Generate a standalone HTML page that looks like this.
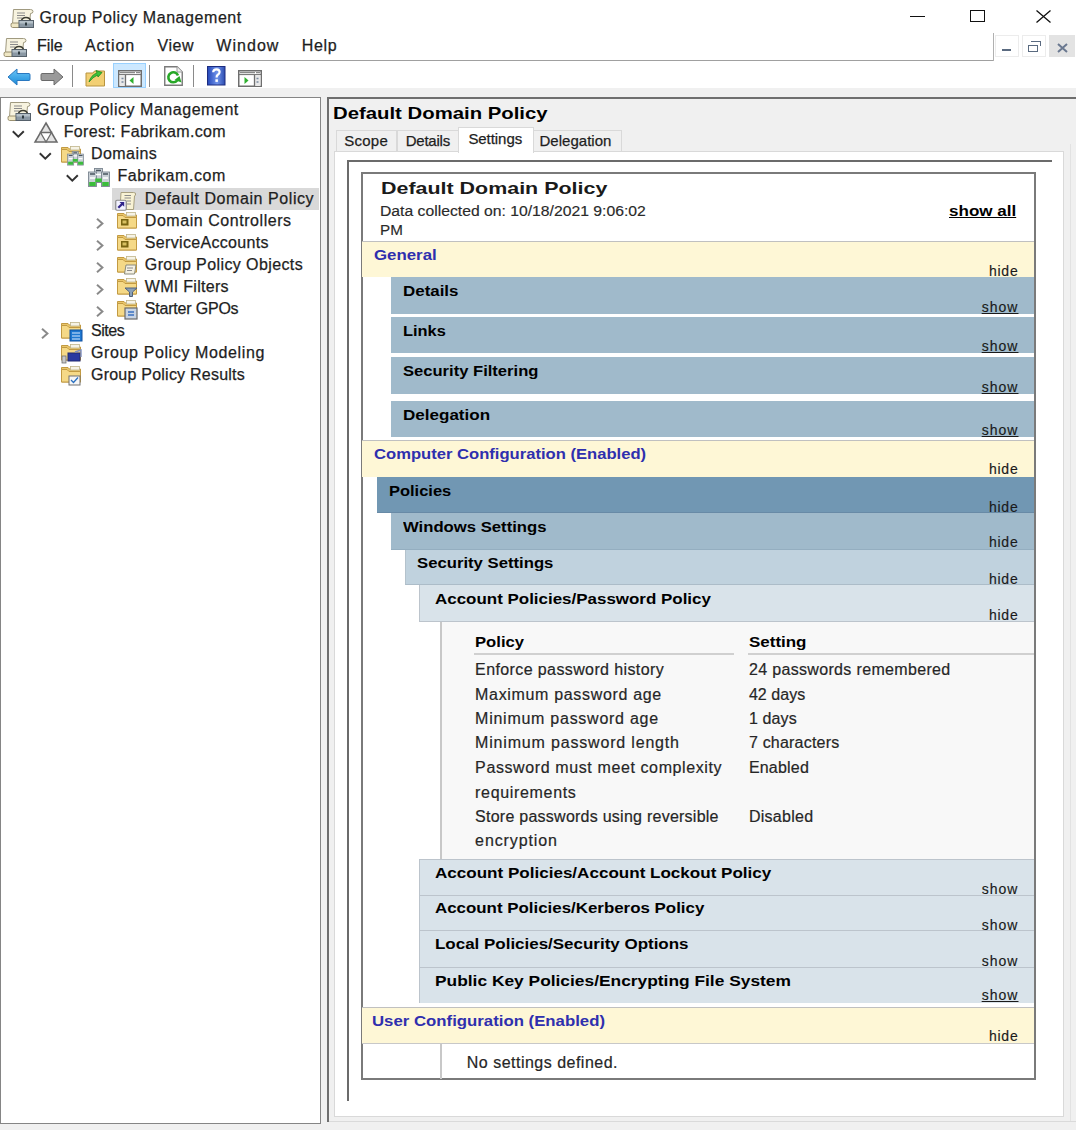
<!DOCTYPE html>
<html><head><meta charset="utf-8">
<style>
*{box-sizing:border-box;margin:0;padding:0}
html,body{width:1076px;height:1130px;overflow:hidden;background:#f0f0f0}
body{position:relative;font-family:"Liberation Sans",sans-serif;color:#000}
.a{position:absolute}
.t{position:absolute;white-space:nowrap;line-height:1;font-family:"Liberation Sans",sans-serif}
svg{position:absolute;overflow:visible}
</style></head>
<body>
<div class="a" style="left:0.0px;top:0.0px;width:1076.0px;height:61.0px;background:#fff"></div>
<svg style="left:9.5px;top:8.5px" width="24" height="19" viewBox="0 0 24 19">
<path d="M3.5 0.5 H20.5 Q23 0.5 23 2.5 Q23 4.5 20.5 4.5 L19.5 15 H2.5 Z" fill="#f7f3df" stroke="#a09a80" stroke-width="1"/>
<path d="M7 4 H15 M7 6.5 H15 M7 9 H12" stroke="#8a8a8a" stroke-width="1.1"/>
<path d="M1 16.5 Q0.5 14 2.5 14 H10 V18.5 H2.5 Q1 18.5 1 16.5Z" fill="#efe7c4" stroke="#9a9070" stroke-width="1"/>
<path d="M11.5 12 Q12 8.5 16 8.5 Q20 8.5 20.5 12" fill="none" stroke="#3e3e34" stroke-width="1.6"/>
<rect x="9" y="11.5" width="14.5" height="7" fill="#8a98a4" stroke="#55606a" stroke-width="1"/>
<rect x="9.5" y="12" width="13.5" height="2.5" fill="#b4c0c8"/>
<rect x="15" y="13.5" width="2" height="3" fill="#2e3a40"/>
</svg>
<div class="t" style="top:10.0px;font-size:16px;font-weight:400;color:#1e1e1e;left:39.5px;letter-spacing:0.56px;-webkit-text-stroke:0.25px #1e1e1e;">Group Policy Management</div>
<div class="a" style="left:910.0px;top:16.0px;width:15.0px;height:1.2px;background:#111"></div>
<div class="a" style="left:970.0px;top:10.0px;width:15.0px;height:12.0px;border:1.4px solid #111"></div>
<svg style="left:1036px;top:10px" width="15" height="13" viewBox="0 0 15 13"><path d="M0.5 0.5 L14.5 12.5 M14.5 0.5 L0.5 12.5" stroke="#111" stroke-width="1.3"/></svg>
<svg style="left:2.5px;top:37.5px" width="24" height="19" viewBox="0 0 24 19">
<path d="M3.5 0.5 H20.5 Q23 0.5 23 2.5 Q23 4.5 20.5 4.5 L19.5 15 H2.5 Z" fill="#f7f3df" stroke="#a09a80" stroke-width="1"/>
<path d="M7 4 H15 M7 6.5 H15 M7 9 H12" stroke="#8a8a8a" stroke-width="1.1"/>
<path d="M1 16.5 Q0.5 14 2.5 14 H10 V18.5 H2.5 Q1 18.5 1 16.5Z" fill="#efe7c4" stroke="#9a9070" stroke-width="1"/>
<path d="M11.5 12 Q12 8.5 16 8.5 Q20 8.5 20.5 12" fill="none" stroke="#3e3e34" stroke-width="1.6"/>
<rect x="9" y="11.5" width="14.5" height="7" fill="#8a98a4" stroke="#55606a" stroke-width="1"/>
<rect x="9.5" y="12" width="13.5" height="2.5" fill="#b4c0c8"/>
<rect x="15" y="13.5" width="2" height="3" fill="#2e3a40"/>
</svg>
<div class="t" style="top:38.0px;font-size:16px;font-weight:400;color:#1e1e1e;left:37.0px;letter-spacing:-0.06px;-webkit-text-stroke:0.25px #1e1e1e;">File</div>
<div class="t" style="top:38.0px;font-size:16px;font-weight:400;color:#1e1e1e;left:85.0px;letter-spacing:0.93px;-webkit-text-stroke:0.25px #1e1e1e;">Action</div>
<div class="t" style="top:38.0px;font-size:16px;font-weight:400;color:#1e1e1e;left:157.5px;letter-spacing:0.57px;-webkit-text-stroke:0.25px #1e1e1e;">View</div>
<div class="t" style="top:38.0px;font-size:16px;font-weight:400;color:#1e1e1e;left:216.3px;letter-spacing:1.04px;-webkit-text-stroke:0.25px #1e1e1e;">Window</div>
<div class="t" style="top:38.0px;font-size:16px;font-weight:400;color:#1e1e1e;left:301.8px;letter-spacing:0.63px;-webkit-text-stroke:0.25px #1e1e1e;">Help</div>
<div class="a" style="left:0.0px;top:60.0px;width:993.0px;height:1.3px;background:#a0a0a0"></div>
<div class="a" style="left:993.0px;top:33.0px;width:1.2px;height:28.0px;background:#b0b0b0"></div>
<div class="a" style="left:994.0px;top:61.0px;width:82.0px;height:1.0px;background:#d0d0d0"></div>
<div class="a" style="left:995.0px;top:35.0px;width:24.0px;height:22.0px;border:1px solid #ececec;background:#fff"></div>
<div class="a" style="left:1002.0px;top:49.0px;width:9.0px;height:2.0px;background:#5a6a80"></div>
<div class="a" style="left:1022.0px;top:35.0px;width:24.0px;height:22.0px;border:1px solid #ececec;background:#fff"></div>
<div class="a" style="left:1028.0px;top:45.0px;width:10.0px;height:7.0px;border:1.5px solid #5a6a80"></div>
<div class="a" style="left:1031.0px;top:41.0px;width:10.0px;height:5.0px;border-top:1.5px solid #5a6a80;border-right:1.5px solid #5a6a80"></div>
<div class="a" style="left:1049.0px;top:35.0px;width:26.0px;height:22.0px;background:#e3e3e3"></div>
<svg style="left:1057px;top:43px" width="11" height="10" viewBox="0 0 11 10"><path d="M1 1 L10 9 M10 1 L1 9" stroke="#6a7890" stroke-width="2"/></svg>
<div class="a" style="left:0.0px;top:61.0px;width:1076.0px;height:27.0px;background:#fff"></div>
<div class="a" style="left:0.0px;top:88.0px;width:1076.0px;height:9.0px;background:#f0f0f0"></div>
<svg style="left:7px;top:68px" width="24" height="18" viewBox="0 0 24 18">
<defs><linearGradient id="gb" x1="0" y1="0" x2="0" y2="1"><stop offset="0" stop-color="#6cc6f7"/><stop offset="1" stop-color="#1a8ad8"/></linearGradient></defs>
<path d="M1 9 L10 1 V5.5 H22 Q23 5.5 23 7 V11 Q23 12.5 22 12.5 H10 V17 Z" fill="url(#gb)" stroke="#2a78c0" stroke-width="1"/>
</svg>
<svg style="left:40px;top:68px" width="24" height="18" viewBox="0 0 24 18">
<path d="M23 9 L14 1 V5.5 H2 Q1 5.5 1 7 V11 Q1 12.5 2 12.5 H14 V17 Z" fill="#9a9a9a" stroke="#6a6a6a" stroke-width="1"/>
</svg>
<div class="a" style="left:71.5px;top:65.0px;width:1.3px;height:22.0px;background:#8a8a8a"></div>
<svg style="left:85px;top:67px" width="21" height="20" viewBox="0 0 21 20">
<path d="M1 6 H8 L9.5 4 H19.5 V19 H1 Z" fill="#f2cf73" stroke="#b89440" stroke-width="1"/>
<path d="M4 15 Q6 8 12 6 L11 3.5 L17 5.5 L13 10 L12.5 8 Q8 10 4 15Z" fill="#3cc43c" stroke="#1e8a1e" stroke-width="0.8"/>
</svg>
<div class="a" style="left:112.5px;top:63.0px;width:33.0px;height:25.0px;background:#cce8ff;border:1px solid #99d1ff"></div>
<svg style="left:117.5px;top:69.5px" width="24" height="17" viewBox="0 0 24 17">
<rect x="0.75" y="0.75" width="22.5" height="15.5" fill="#fff" stroke="#6e6e6e" stroke-width="1.5"/>
<path d="M2 2.6 H17 M18 2.6 H22" stroke="#8a8a8a" stroke-width="1.4"/>
<path d="M1 4.6 H23" stroke="#6e6e6e" stroke-width="1"/>
<rect x="1.5" y="5" width="6" height="11" fill="#e8e8e8"/>
<path d="M7.5 5 V16" stroke="#6e6e6e" stroke-width="1.3"/>
<path d="M3.5 8.5 h2 M3.5 12 h2" stroke="#7a8aa0" stroke-width="1.6"/>
<path d="M11.5 10.5 L15.5 7 V14 Z" fill="#2fb02f"/>
</svg>
<div class="a" style="left:148.5px;top:65.0px;width:1.3px;height:22.0px;background:#8a8a8a"></div>
<svg style="left:164px;top:66px" width="19" height="20" viewBox="0 0 19 20">
<path d="M0.75 0.75 H13 L18.25 6 V19.25 H0.75 Z" fill="#fff" stroke="#7a7a7a" stroke-width="1.4"/>
<path d="M13 0.75 V6 H18.25" fill="#f0f0f0" stroke="#9a9a9a" stroke-width="1"/>
<path d="M13.2 14.5 A5 5 0 1 1 14 9.5" fill="none" stroke="#28a828" stroke-width="2.6"/>
<path d="M10.5 14 L17.5 16.5 L15.5 10 Z" fill="#28a828"/>
</svg>
<div class="a" style="left:192.7px;top:65.0px;width:1.3px;height:22.0px;background:#8a8a8a"></div>
<svg style="left:207px;top:66px" width="18.5" height="19.5" viewBox="0 0 18.5 19.5">
<defs><linearGradient id="gh" x1="0" y1="0" x2="1" y2="0"><stop offset="0" stop-color="#2446b8"/><stop offset="0.55" stop-color="#6f93ea"/><stop offset="1" stop-color="#2c4cb0"/></linearGradient></defs>
<rect x="0.5" y="0.5" width="17.5" height="18.5" fill="url(#gh)" stroke="#1c2c80"/>
<path d="M6.2 6.3 Q6.3 3.3 9.5 3.3 Q12.6 3.3 12.6 6 Q12.6 7.8 10.6 9 Q9.6 9.7 9.6 11.5" fill="none" stroke="#fff" stroke-width="2.2"/>
<rect x="8.4" y="13.3" width="2.5" height="2.6" fill="#fff"/>
</svg>
<svg style="left:237.5px;top:69.5px" width="24" height="17" viewBox="0 0 24 17">
<rect x="0.75" y="0.75" width="22.5" height="15.5" fill="#fff" stroke="#6e6e6e" stroke-width="1.5"/>
<path d="M2 2.6 H17 M18 2.6 H22" stroke="#8a8a8a" stroke-width="1.4"/>
<path d="M1 4.6 H23" stroke="#6e6e6e" stroke-width="1"/>
<rect x="16.5" y="5" width="6" height="11" fill="#e8e8e8"/>
<path d="M16.5 5 V16" stroke="#6e6e6e" stroke-width="1.3"/>
<path d="M18.5 8.5 h2 M18.5 12 h2" stroke="#7a8aa0" stroke-width="1.6"/>
<path d="M6.5 7 L10.5 10.5 L6.5 14 Z" fill="#2fb02f"/>
</svg>
<div class="a" style="left:0.0px;top:97.0px;width:321.0px;height:1027.0px;background:#fff;border:1.5px solid #858585"></div>
<svg style="left:7px;top:102px" width="24" height="19" viewBox="0 0 24 19">
<path d="M3.5 0.5 H20.5 Q23 0.5 23 2.5 Q23 4.5 20.5 4.5 L19.5 15 H2.5 Z" fill="#f7f3df" stroke="#a09a80" stroke-width="1"/>
<path d="M7 4 H15 M7 6.5 H15 M7 9 H12" stroke="#8a8a8a" stroke-width="1.1"/>
<path d="M1 16.5 Q0.5 14 2.5 14 H10 V18.5 H2.5 Q1 18.5 1 16.5Z" fill="#efe7c4" stroke="#9a9070" stroke-width="1"/>
<path d="M11.5 12 Q12 8.5 16 8.5 Q20 8.5 20.5 12" fill="none" stroke="#3e3e34" stroke-width="1.6"/>
<rect x="9" y="11.5" width="14.5" height="7" fill="#8a98a4" stroke="#55606a" stroke-width="1"/>
<rect x="9.5" y="12" width="13.5" height="2.5" fill="#b4c0c8"/>
<rect x="15" y="13.5" width="2" height="3" fill="#2e3a40"/>
</svg>
<div class="t" style="top:102.0px;font-size:16px;font-weight:400;color:#1e1e1e;left:37.0px;letter-spacing:0.54px;-webkit-text-stroke:0.25px #1e1e1e;">Group Policy Management</div>
<svg style="left:11.5px;top:129.5px" width="13" height="8" viewBox="0 0 13 8"><path d="M0.8 1.3 L6.3 6.6 L11.8 1.3" fill="none" stroke="#333" stroke-width="2"/></svg>
<svg style="left:34px;top:122px" width="24" height="21" viewBox="0 0 24 21">
<path d="M12 1 L23 20 H1 Z" fill="#e4e4e4" stroke="#6a6a6a" stroke-width="1.5"/>
<path d="M6.5 10.5 H17.5 L12 20 Z" fill="#fff" stroke="#6a6a6a" stroke-width="1.3"/>
</svg>
<div class="t" style="top:124.0px;font-size:16px;font-weight:400;color:#1e1e1e;left:63.7px;letter-spacing:0.33px;-webkit-text-stroke:0.25px #1e1e1e;">Forest: Fabrikam.com</div>
<svg style="left:38.5px;top:151.5px" width="13" height="8" viewBox="0 0 13 8"><path d="M0.8 1.3 L6.3 6.6 L11.8 1.3" fill="none" stroke="#333" stroke-width="2"/></svg>
<svg style="left:61px;top:146px" width="24" height="19" viewBox="0 0 24 19"><path d="M0.5 1.5 H7 L8.5 3 H19.5 V16 H0.5 Z" fill="#e9c66a" stroke="#c29a42" stroke-width="1"/><rect x="9.5" y="0.5" width="9" height="3.5" fill="#f6f3e6" stroke="#c0b58a" stroke-width="0.8"/><path d="M0.5 3.5 H6 L8 5.5 H19.5 V16 H0.5 Z" fill="#f5d987" stroke="#c29a42" stroke-width="1"/></svg>
<svg style="left:66.5px;top:150.5px" width="18" height="14.5" viewBox="0 0 23 19">

<g stroke="#7a8590" stroke-width="0.9">
<rect x="6.5" y="0.5" width="8" height="14" fill="#c9d0d6"/>
<rect x="0.5" y="4" width="8" height="14.5" fill="#c9d0d6"/>
<rect x="13.5" y="4" width="8" height="14.5" fill="#c9d0d6"/>
</g>
<path d="M8 2.5 H13 M2 6 H7 M15 6 H20" stroke="#4a5560" stroke-width="1.4"/>
<path d="M8 6.5 H13 M2 10 H7 M15 10 H20" stroke="#ffffff" stroke-width="1.6"/>
<rect x="7.2" y="10.5" width="6.6" height="3.5" fill="#3cbc3c"/>
<rect x="1.2" y="14" width="6.6" height="4" fill="#3cbc3c"/><rect x="14.2" y="14" width="6.6" height="4" fill="#3cbc3c"/>
</svg>
<div class="t" style="top:146.0px;font-size:16px;font-weight:400;color:#1e1e1e;left:91.0px;letter-spacing:0.44px;-webkit-text-stroke:0.25px #1e1e1e;">Domains</div>
<svg style="left:65.5px;top:173.5px" width="13" height="8" viewBox="0 0 13 8"><path d="M0.8 1.3 L6.3 6.6 L11.8 1.3" fill="none" stroke="#333" stroke-width="2"/></svg>
<svg style="left:88px;top:168px" width="23" height="19" viewBox="0 0 23 19">

<g stroke="#7a8590" stroke-width="0.9">
<rect x="6.5" y="0.5" width="8" height="14" fill="#c9d0d6"/>
<rect x="0.5" y="4" width="8" height="14.5" fill="#c9d0d6"/>
<rect x="13.5" y="4" width="8" height="14.5" fill="#c9d0d6"/>
</g>
<path d="M8 2.5 H13 M2 6 H7 M15 6 H20" stroke="#4a5560" stroke-width="1.4"/>
<path d="M8 6.5 H13 M2 10 H7 M15 10 H20" stroke="#ffffff" stroke-width="1.6"/>
<rect x="7.2" y="10.5" width="6.6" height="3.5" fill="#3cbc3c"/>
<rect x="1.2" y="14" width="6.6" height="4" fill="#3cbc3c"/><rect x="14.2" y="14" width="6.6" height="4" fill="#3cbc3c"/>
</svg>
<div class="t" style="top:168.0px;font-size:16px;font-weight:400;color:#1e1e1e;left:117.5px;letter-spacing:0.59px;-webkit-text-stroke:0.25px #1e1e1e;">Fabrikam.com</div>
<div class="a" style="left:112.3px;top:188.0px;width:206.5px;height:22.0px;background:#d9d9d9"></div>
<svg style="left:115px;top:190.5px" width="22" height="20" viewBox="0 0 22 20">
<path d="M6 1.5 H18.5 Q21.5 1.5 20.5 4 L19.5 5 L18.5 18.5 H5 Z" fill="#f8f2d4" stroke="#a8a080" stroke-width="1"/>
<path d="M9.5 4.5 H16 M9.5 7 H16 M12 10 H16 M12 13 H16" stroke="#8a8a8a" stroke-width="1.1"/>
<rect x="0.75" y="9.25" width="10.5" height="10" rx="1.2" fill="#f2f2ff" stroke="#8a8a8a" stroke-width="1.2"/>
<path d="M3.3 16.8 L8 12.1" stroke="#30248a" stroke-width="2.2" fill="none"/>
<path d="M4.5 11 H9.2 V15.7 Z" fill="#30248a"/>
</svg>
<div class="t" style="top:191.0px;font-size:16px;font-weight:400;color:#1e1e1e;left:144.8px;letter-spacing:0.57px;-webkit-text-stroke:0.25px #1e1e1e;">Default Domain Policy</div>
<svg style="left:95.5px;top:217.6px" width="8" height="11" viewBox="0 0 8 11"><path d="M1 0.8 L6.4 5.5 L1 10.2" fill="none" stroke="#8a8a8a" stroke-width="2"/></svg>
<svg style="left:116.5px;top:211.6px" width="21" height="17" viewBox="0 0 21 17">
<path d="M0.5 1.5 H7 L8.5 3 H19.5 V16 H0.5 Z" fill="#e9c66a" stroke="#c29a42" stroke-width="1"/>
<rect x="9.5" y="0.5" width="9" height="3.5" fill="#f6f3e6" stroke="#c0b58a" stroke-width="0.8"/>
<path d="M0.5 3.5 H6 L8 5.5 H19.5 V16 H0.5 Z" fill="#f5d987" stroke="#c29a42" stroke-width="1"/>
<rect x="4" y="7" width="7.5" height="6.5" fill="#7a6510"/><rect x="5.5" y="8.5" width="4" height="3" fill="#d8c060"/>
</svg>
<div class="t" style="top:213.0px;font-size:16px;font-weight:400;color:#1e1e1e;left:144.8px;letter-spacing:0.55px;-webkit-text-stroke:0.25px #1e1e1e;">Domain Controllers</div>
<svg style="left:95.5px;top:239.6px" width="8" height="11" viewBox="0 0 8 11"><path d="M1 0.8 L6.4 5.5 L1 10.2" fill="none" stroke="#8a8a8a" stroke-width="2"/></svg>
<svg style="left:116.5px;top:233.6px" width="21" height="17" viewBox="0 0 21 17">
<path d="M0.5 1.5 H7 L8.5 3 H19.5 V16 H0.5 Z" fill="#e9c66a" stroke="#c29a42" stroke-width="1"/>
<rect x="9.5" y="0.5" width="9" height="3.5" fill="#f6f3e6" stroke="#c0b58a" stroke-width="0.8"/>
<path d="M0.5 3.5 H6 L8 5.5 H19.5 V16 H0.5 Z" fill="#f5d987" stroke="#c29a42" stroke-width="1"/>
<rect x="4" y="7" width="7.5" height="6.5" fill="#7a6510"/><rect x="5.5" y="8.5" width="4" height="3" fill="#d8c060"/>
</svg>
<div class="t" style="top:235.0px;font-size:16px;font-weight:400;color:#1e1e1e;left:144.8px;letter-spacing:0.33px;-webkit-text-stroke:0.25px #1e1e1e;">ServiceAccounts</div>
<svg style="left:95.5px;top:261.6px" width="8" height="11" viewBox="0 0 8 11"><path d="M1 0.8 L6.4 5.5 L1 10.2" fill="none" stroke="#8a8a8a" stroke-width="2"/></svg>
<svg style="left:116.5px;top:255.60000000000002px" width="21" height="17" viewBox="0 0 21 17">
<path d="M0.5 1.5 H7 L8.5 3 H19.5 V16 H0.5 Z" fill="#e9c66a" stroke="#c29a42" stroke-width="1"/>
<rect x="9.5" y="0.5" width="9" height="3.5" fill="#f6f3e6" stroke="#c0b58a" stroke-width="0.8"/>
<path d="M0.5 3.5 H6 L8 5.5 H19.5 V16 H0.5 Z" fill="#f5d987" stroke="#c29a42" stroke-width="1"/>
<path d="M9 9 H19 L17.5 18 H7.5 Z" fill="#f4f1e4" stroke="#8a8a7a" stroke-width="1"/><path d="M10 12 H16 M10 14.5 H15" stroke="#8a8a8a" stroke-width="1"/>
</svg>
<div class="t" style="top:257.0px;font-size:16px;font-weight:400;color:#1e1e1e;left:144.8px;letter-spacing:0.40px;-webkit-text-stroke:0.25px #1e1e1e;">Group Policy Objects</div>
<svg style="left:95.5px;top:283.6px" width="8" height="11" viewBox="0 0 8 11"><path d="M1 0.8 L6.4 5.5 L1 10.2" fill="none" stroke="#8a8a8a" stroke-width="2"/></svg>
<svg style="left:116.5px;top:277.6px" width="21" height="17" viewBox="0 0 21 17">
<path d="M0.5 1.5 H7 L8.5 3 H19.5 V16 H0.5 Z" fill="#e9c66a" stroke="#c29a42" stroke-width="1"/>
<rect x="9.5" y="0.5" width="9" height="3.5" fill="#f6f3e6" stroke="#c0b58a" stroke-width="0.8"/>
<path d="M0.5 3.5 H6 L8 5.5 H19.5 V16 H0.5 Z" fill="#f5d987" stroke="#c29a42" stroke-width="1"/>
<path d="M8 10 H20 L15.5 14 V18.5 H12.5 V14 Z" fill="#8aa0b8" stroke="#50627a" stroke-width="1"/>
</svg>
<div class="t" style="top:279.0px;font-size:16px;font-weight:400;color:#1e1e1e;left:144.8px;letter-spacing:0.29px;-webkit-text-stroke:0.25px #1e1e1e;">WMI Filters</div>
<svg style="left:95.5px;top:305.6px" width="8" height="11" viewBox="0 0 8 11"><path d="M1 0.8 L6.4 5.5 L1 10.2" fill="none" stroke="#8a8a8a" stroke-width="2"/></svg>
<svg style="left:116.5px;top:299.6px" width="21" height="17" viewBox="0 0 21 17">
<path d="M0.5 1.5 H7 L8.5 3 H19.5 V16 H0.5 Z" fill="#e9c66a" stroke="#c29a42" stroke-width="1"/>
<rect x="9.5" y="0.5" width="9" height="3.5" fill="#f6f3e6" stroke="#c0b58a" stroke-width="0.8"/>
<path d="M0.5 3.5 H6 L8 5.5 H19.5 V16 H0.5 Z" fill="#f5d987" stroke="#c29a42" stroke-width="1"/>
<rect x="8" y="8" width="12" height="11" fill="#c8d4e4" stroke="#6a6a6a" stroke-width="1.2"/><path d="M11 12 H17 M11 15 H17" stroke="#3a70c0" stroke-width="1.3"/>
</svg>
<div class="t" style="top:301.0px;font-size:16px;font-weight:400;color:#1e1e1e;left:144.8px;letter-spacing:-0.20px;-webkit-text-stroke:0.25px #1e1e1e;">Starter GPOs</div>
<svg style="left:41px;top:328px" width="8" height="11" viewBox="0 0 8 11"><path d="M1 0.8 L6.4 5.5 L1 10.2" fill="none" stroke="#8a8a8a" stroke-width="2"/></svg>
<svg style="left:61px;top:322px" width="21" height="17" viewBox="0 0 21 17">
<path d="M0.5 1.5 H7 L8.5 3 H19.5 V16 H0.5 Z" fill="#e9c66a" stroke="#c29a42" stroke-width="1"/>
<rect x="9.5" y="0.5" width="9" height="3.5" fill="#f6f3e6" stroke="#c0b58a" stroke-width="0.8"/>
<path d="M0.5 3.5 H6 L8 5.5 H19.5 V16 H0.5 Z" fill="#f5d987" stroke="#c29a42" stroke-width="1"/>
<rect x="9" y="8" width="12" height="11" fill="#1f78d1" stroke="#1050a0" stroke-width="1"/><path d="M11 11 H19 M11 14 H19 M11 17 H19" stroke="#d8e8ff" stroke-width="1.2"/>
</svg>
<div class="t" style="top:323.0px;font-size:16px;font-weight:400;color:#1e1e1e;left:91.0px;letter-spacing:-0.44px;-webkit-text-stroke:0.25px #1e1e1e;">Sites</div>
<svg style="left:61px;top:344px" width="21" height="17" viewBox="0 0 21 17">
<path d="M0.5 1.5 H7 L8.5 3 H19.5 V16 H0.5 Z" fill="#e9c66a" stroke="#c29a42" stroke-width="1"/>
<rect x="9.5" y="0.5" width="9" height="3.5" fill="#f6f3e6" stroke="#c0b58a" stroke-width="0.8"/>
<path d="M0.5 3.5 H6 L8 5.5 H19.5 V16 H0.5 Z" fill="#f5d987" stroke="#c29a42" stroke-width="1"/>
<rect x="7" y="9" width="12" height="8" fill="#2a3aa0" stroke="#202a70" stroke-width="1"/><rect x="1" y="12" width="4" height="7" fill="#c8c8c8" stroke="#707070" stroke-width="0.8"/><path d="M14 8 L20 6 V13" fill="none" stroke="#8090c0" stroke-width="1.4"/>
</svg>
<div class="t" style="top:345.0px;font-size:16px;font-weight:400;color:#1e1e1e;left:91.0px;letter-spacing:0.62px;-webkit-text-stroke:0.25px #1e1e1e;">Group Policy Modeling</div>
<svg style="left:61px;top:366px" width="21" height="17" viewBox="0 0 21 17">
<path d="M0.5 1.5 H7 L8.5 3 H19.5 V16 H0.5 Z" fill="#e9c66a" stroke="#c29a42" stroke-width="1"/>
<rect x="9.5" y="0.5" width="9" height="3.5" fill="#f6f3e6" stroke="#c0b58a" stroke-width="0.8"/>
<path d="M0.5 3.5 H6 L8 5.5 H19.5 V16 H0.5 Z" fill="#f5d987" stroke="#c29a42" stroke-width="1"/>
<rect x="8" y="10" width="11" height="9" fill="#f6f6f6" stroke="#707070" stroke-width="1"/><path d="M10 14 L12.5 16.5 L17 11.5" fill="none" stroke="#2a70c0" stroke-width="1.3"/>
</svg>
<div class="t" style="top:367.0px;font-size:16px;font-weight:400;color:#1e1e1e;left:91.0px;letter-spacing:0.23px;-webkit-text-stroke:0.25px #1e1e1e;">Group Policy Results</div>
<div class="a" style="left:327.0px;top:97.0px;width:749.0px;height:1025.0px;background:#f0f0f0;border-left:2px solid #6e6e6e;border-top:2px solid #6e6e6e"></div>
<div class="t" style="top:105.0px;font-size:17px;font-weight:700;color:#000;left:333.2px;transform:scaleX(1.1956);transform-origin:0 0;">Default Domain Policy</div>
<div class="a" style="left:336.0px;top:130.0px;width:61.0px;height:22.0px;background:#f0f0f0;border:1px solid #d9d9d9;border-bottom:none"></div>
<div class="a" style="left:396.5px;top:130.0px;width:62.0px;height:22.0px;background:#f0f0f0;border:1px solid #d9d9d9;border-bottom:none"></div>
<div class="a" style="left:533.0px;top:130.0px;width:89.0px;height:22.0px;background:#f0f0f0;border:1px solid #d9d9d9;border-bottom:none"></div>
<div class="a" style="left:334.0px;top:151.0px;width:730.0px;height:966.0px;background:#fff;border:1px solid #d9d9d9"></div>
<div class="a" style="left:458.0px;top:127.0px;width:76.0px;height:26.0px;background:#fff;border:1px solid #d9d9d9;border-bottom:none"></div>
<div class="t" style="top:133.0px;font-size:15px;font-weight:400;color:#1e1e1e;left:344.3px;letter-spacing:0.24px;-webkit-text-stroke:0.25px #1e1e1e;">Scope</div>
<div class="t" style="top:133.0px;font-size:15px;font-weight:400;color:#1e1e1e;left:405.7px;letter-spacing:-0.23px;-webkit-text-stroke:0.25px #1e1e1e;">Details</div>
<div class="t" style="top:131.0px;font-size:15px;font-weight:400;color:#1e1e1e;left:468.4px;letter-spacing:-0.06px;-webkit-text-stroke:0.25px #1e1e1e;">Settings</div>
<div class="t" style="top:133.0px;font-size:15px;font-weight:400;color:#1e1e1e;left:539.5px;letter-spacing:0.02px;-webkit-text-stroke:0.25px #1e1e1e;">Delegation</div>
<div class="a" style="left:1070.0px;top:144.0px;width:1.0px;height:978.0px;background:#e2e2e2"></div>
<div class="a" style="left:329.0px;top:1121.0px;width:747.0px;height:1.0px;background:#dadada"></div>
<div class="a" style="left:347.0px;top:160.0px;width:705.0px;height:2.0px;background:#6b6b6b"></div>
<div class="a" style="left:347.0px;top:160.0px;width:2.0px;height:941.0px;background:#6b6b6b"></div>
<div class="a" style="left:361.0px;top:172.0px;width:675.0px;height:908.0px;background:#fff;border:2px solid #7a7a7a"></div>
<div class="t" style="top:180.0px;font-size:16.5px;font-weight:700;color:#1a1a1a;left:380.5px;transform:scaleX(1.2991);transform-origin:0 0;">Default Domain Policy</div>
<div class="t" style="top:204.0px;font-size:14px;font-weight:400;color:#2a2a2a;left:380.0px;transform:scaleX(1.1232);transform-origin:0 0;-webkit-text-stroke:0.15px #2a2a2a;">Data collected on: 10/18/2021 9:06:02</div>
<div class="t" style="top:223.0px;font-size:14px;font-weight:400;color:#2a2a2a;left:380.0px;transform:scaleX(1.0857);transform-origin:0 0;-webkit-text-stroke:0.15px #2a2a2a;">PM</div>
<div class="t" style="top:203.0px;font-size:15px;font-weight:700;color:#000;left:949.0px;transform:scaleX(1.1354);transform-origin:0 0;text-decoration:underline">show all</div>
<div class="a" style="left:362.0px;top:241.0px;width:672.0px;height:36.0px;background:#fef7d6;border-top:1px solid #c0c0c0;"></div>
<div class="t" style="top:247.0px;font-size:15px;font-weight:700;color:#2f2fae;left:373.5px;transform:scaleX(1.1221);transform-origin:0 0;">General</div>
<div class="t" style="top:264.0px;font-size:14px;font-weight:400;color:#1a1a1a;right:57.5px;letter-spacing:0.78px;-webkit-text-stroke:0.15px #1a1a1a;">hide</div>
<div class="a" style="left:391.0px;top:277.0px;width:643.0px;height:37.0px;background:#a0bacb;"></div>
<div class="t" style="top:283.0px;font-size:15px;font-weight:700;color:#000;left:403.0px;transform:scaleX(1.1280);transform-origin:0 0;">Details</div>
<div class="t" style="top:300.0px;font-size:14px;font-weight:400;color:#1a1a1a;right:57.5px;letter-spacing:1.04px;-webkit-text-stroke:0.15px #1a1a1a;text-decoration:underline">show</div>
<div class="a" style="left:391.0px;top:317.0px;width:643.0px;height:36.0px;background:#a0bacb;"></div>
<div class="t" style="top:323.0px;font-size:15px;font-weight:700;color:#000;left:403.0px;transform:scaleX(1.0922);transform-origin:0 0;">Links</div>
<div class="t" style="top:339.0px;font-size:14px;font-weight:400;color:#1a1a1a;right:57.5px;letter-spacing:1.04px;-webkit-text-stroke:0.15px #1a1a1a;text-decoration:underline">show</div>
<div class="a" style="left:391.0px;top:357.0px;width:643.0px;height:37.0px;background:#a0bacb;"></div>
<div class="t" style="top:363.0px;font-size:15px;font-weight:700;color:#000;left:403.0px;transform:scaleX(1.1050);transform-origin:0 0;">Security Filtering</div>
<div class="t" style="top:380.0px;font-size:14px;font-weight:400;color:#1a1a1a;right:57.5px;letter-spacing:1.04px;-webkit-text-stroke:0.15px #1a1a1a;text-decoration:underline">show</div>
<div class="a" style="left:391.0px;top:401.0px;width:643.0px;height:36.0px;background:#a0bacb;"></div>
<div class="t" style="top:407.0px;font-size:15px;font-weight:700;color:#000;left:403.0px;transform:scaleX(1.1358);transform-origin:0 0;">Delegation</div>
<div class="t" style="top:423.0px;font-size:14px;font-weight:400;color:#1a1a1a;right:57.5px;letter-spacing:1.04px;-webkit-text-stroke:0.15px #1a1a1a;text-decoration:underline">show</div>
<div class="a" style="left:362.0px;top:440.0px;width:672.0px;height:37.0px;background:#fef7d6;border-top:1px solid #c0c0c0;"></div>
<div class="t" style="top:446.0px;font-size:15px;font-weight:700;color:#2f2fae;left:373.5px;transform:scaleX(1.1069);transform-origin:0 0;">Computer Configuration (Enabled)</div>
<div class="t" style="top:462.0px;font-size:14px;font-weight:400;color:#1a1a1a;right:57.5px;letter-spacing:0.78px;-webkit-text-stroke:0.15px #1a1a1a;">hide</div>
<div class="a" style="left:377.0px;top:477.0px;width:657.0px;height:36.0px;background:#7197b3;border-bottom:1px solid #688aa6;"></div>
<div class="t" style="top:483.0px;font-size:15px;font-weight:700;color:#000;left:388.6px;transform:scaleX(1.0969);transform-origin:0 0;">Policies</div>
<div class="t" style="top:500.0px;font-size:14px;font-weight:400;color:#1a1a1a;right:57.5px;letter-spacing:0.78px;-webkit-text-stroke:0.15px #1a1a1a;">hide</div>
<div class="a" style="left:391.0px;top:513.0px;width:643.0px;height:37.0px;background:#a0bacb;border-bottom:1px solid #94aec0;"></div>
<div class="t" style="top:519.0px;font-size:15px;font-weight:700;color:#000;left:402.8px;transform:scaleX(1.1121);transform-origin:0 0;">Windows Settings</div>
<div class="t" style="top:535.0px;font-size:14px;font-weight:400;color:#1a1a1a;right:57.5px;letter-spacing:0.78px;-webkit-text-stroke:0.15px #1a1a1a;">hide</div>
<div class="a" style="left:405.0px;top:550.0px;width:629.0px;height:35.0px;background:#c0d2de;border-left:1px solid #b4c2cc;border-bottom:1px solid #acbcc8;"></div>
<div class="t" style="top:555.0px;font-size:15px;font-weight:700;color:#000;left:416.9px;transform:scaleX(1.1130);transform-origin:0 0;">Security Settings</div>
<div class="t" style="top:572.0px;font-size:14px;font-weight:400;color:#1a1a1a;right:57.5px;letter-spacing:0.78px;-webkit-text-stroke:0.15px #1a1a1a;">hide</div>
<div class="a" style="left:419.0px;top:585.0px;width:615.0px;height:37.0px;background:#d9e3ea;border-left:1px solid #bcc4cc;border-bottom:1px solid #bcc4cc;"></div>
<div class="t" style="top:591.0px;font-size:15px;font-weight:700;color:#000;left:435.3px;transform:scaleX(1.1296);transform-origin:0 0;">Account Policies/Password Policy</div>
<div class="t" style="top:608.0px;font-size:14px;font-weight:400;color:#1a1a1a;right:57.5px;letter-spacing:0.78px;-webkit-text-stroke:0.15px #1a1a1a;">hide</div>
<div class="a" style="left:440.0px;top:622.0px;width:594.0px;height:237.0px;background:#f8f8f8;border-left:2px solid #c8c8c8"></div>
<div class="t" style="top:634.0px;font-size:15px;font-weight:700;color:#000;left:475.1px;transform:scaleX(1.1089);transform-origin:0 0;">Policy</div>
<div class="t" style="top:634.0px;font-size:15px;font-weight:700;color:#000;left:748.9px;transform:scaleX(1.1309);transform-origin:0 0;">Setting</div>
<div class="a" style="left:474.0px;top:653.0px;width:260.0px;height:1.5px;background:#d0d0d0"></div>
<div class="a" style="left:748.0px;top:653.0px;width:286.0px;height:1.5px;background:#d0d0d0"></div>
<div class="t" style="top:662.0px;font-size:16px;font-weight:400;color:#262626;left:475.1px;letter-spacing:0.39px;-webkit-text-stroke:0.2px #262626;">Enforce password history</div>
<div class="t" style="top:662.0px;font-size:16px;font-weight:400;color:#262626;left:748.9px;letter-spacing:0.34px;-webkit-text-stroke:0.2px #262626;">24 passwords remembered</div>
<div class="t" style="top:687.0px;font-size:16px;font-weight:400;color:#262626;left:475.1px;letter-spacing:0.67px;-webkit-text-stroke:0.2px #262626;">Maximum password age</div>
<div class="t" style="top:687.0px;font-size:16px;font-weight:400;color:#262626;left:748.9px;letter-spacing:0.04px;-webkit-text-stroke:0.2px #262626;">42 days</div>
<div class="t" style="top:711.0px;font-size:16px;font-weight:400;color:#262626;left:475.1px;letter-spacing:0.74px;-webkit-text-stroke:0.2px #262626;">Minimum password age</div>
<div class="t" style="top:711.0px;font-size:16px;font-weight:400;color:#262626;left:748.9px;letter-spacing:0.13px;-webkit-text-stroke:0.2px #262626;">1 days</div>
<div class="t" style="top:735.0px;font-size:16px;font-weight:400;color:#262626;left:475.1px;letter-spacing:0.82px;-webkit-text-stroke:0.2px #262626;">Minimum password length</div>
<div class="t" style="top:735.0px;font-size:16px;font-weight:400;color:#262626;left:748.9px;letter-spacing:0.21px;-webkit-text-stroke:0.2px #262626;">7 characters</div>
<div class="t" style="top:760.0px;font-size:16px;font-weight:400;color:#262626;left:475.1px;letter-spacing:0.61px;-webkit-text-stroke:0.2px #262626;">Password must meet complexity</div>
<div class="t" style="top:760.0px;font-size:16px;font-weight:400;color:#262626;left:748.9px;letter-spacing:0.20px;-webkit-text-stroke:0.2px #262626;">Enabled</div>
<div class="t" style="top:785.0px;font-size:16px;font-weight:400;color:#262626;left:475.1px;letter-spacing:0.67px;-webkit-text-stroke:0.2px #262626;">requirements</div>
<div class="t" style="top:809.0px;font-size:16px;font-weight:400;color:#262626;left:475.1px;letter-spacing:0.25px;-webkit-text-stroke:0.2px #262626;">Store passwords using reversible</div>
<div class="t" style="top:809.0px;font-size:16px;font-weight:400;color:#262626;left:748.9px;letter-spacing:0.28px;-webkit-text-stroke:0.2px #262626;">Disabled</div>
<div class="t" style="top:833.0px;font-size:16px;font-weight:400;color:#262626;left:475.1px;letter-spacing:0.90px;-webkit-text-stroke:0.2px #262626;">encryption</div>
<div class="a" style="left:419.0px;top:859.0px;width:615.0px;height:36.0px;background:#d9e3ea;border-top:1px solid #bcc4cc;border-left:1px solid #bcc4cc;"></div>
<div class="t" style="top:865.0px;font-size:15px;font-weight:700;color:#000;left:435.2px;transform:scaleX(1.1366);transform-origin:0 0;">Account Policies/Account Lockout Policy</div>
<div class="t" style="top:882.0px;font-size:14px;font-weight:400;color:#1a1a1a;right:57.5px;letter-spacing:1.04px;-webkit-text-stroke:0.15px #1a1a1a;">show</div>
<div class="a" style="left:419.0px;top:895.0px;width:615.0px;height:35.0px;background:#d9e3ea;border-top:1px solid #bcc4cc;border-left:1px solid #bcc4cc;"></div>
<div class="t" style="top:900.0px;font-size:15px;font-weight:700;color:#000;left:435.2px;transform:scaleX(1.1256);transform-origin:0 0;">Account Policies/Kerberos Policy</div>
<div class="t" style="top:918.0px;font-size:14px;font-weight:400;color:#1a1a1a;right:57.5px;letter-spacing:1.04px;-webkit-text-stroke:0.15px #1a1a1a;">show</div>
<div class="a" style="left:419.0px;top:930.0px;width:615.0px;height:37.0px;background:#d9e3ea;border-top:1px solid #bcc4cc;border-left:1px solid #bcc4cc;"></div>
<div class="t" style="top:936.0px;font-size:15px;font-weight:700;color:#000;left:435.2px;transform:scaleX(1.1305);transform-origin:0 0;">Local Policies/Security Options</div>
<div class="t" style="top:954.0px;font-size:14px;font-weight:400;color:#1a1a1a;right:57.5px;letter-spacing:1.04px;-webkit-text-stroke:0.15px #1a1a1a;">show</div>
<div class="a" style="left:419.0px;top:967.0px;width:615.0px;height:36.0px;background:#d9e3ea;border-top:1px solid #bcc4cc;border-left:1px solid #bcc4cc;"></div>
<div class="t" style="top:973.0px;font-size:15px;font-weight:700;color:#000;left:435.2px;transform:scaleX(1.1570);transform-origin:0 0;">Public Key Policies/Encrypting File System</div>
<div class="t" style="top:988.0px;font-size:14px;font-weight:400;color:#1a1a1a;right:57.5px;letter-spacing:1.04px;-webkit-text-stroke:0.15px #1a1a1a;text-decoration:underline">show</div>
<div class="a" style="left:362.0px;top:1007.0px;width:672.0px;height:36.0px;background:#fef7d6;border-top:1px solid #c0c0c0;"></div>
<div class="t" style="top:1013.0px;font-size:15px;font-weight:700;color:#2f2fae;left:371.8px;transform:scaleX(1.1183);transform-origin:0 0;">User Configuration (Enabled)</div>
<div class="t" style="top:1029.0px;font-size:14px;font-weight:400;color:#1a1a1a;right:57.5px;letter-spacing:0.78px;-webkit-text-stroke:0.15px #1a1a1a;">hide</div>
<div class="a" style="left:362.0px;top:1043.0px;width:672.0px;height:1.0px;background:#c8c8c8"></div>
<div class="a" style="left:440.0px;top:1044.0px;width:2.0px;height:35.0px;background:#c8c8c8"></div>
<div class="t" style="top:1055.0px;font-size:16px;font-weight:400;color:#262626;left:466.8px;letter-spacing:0.49px;-webkit-text-stroke:0.2px #262626;">No settings defined.</div>
</body></html>
